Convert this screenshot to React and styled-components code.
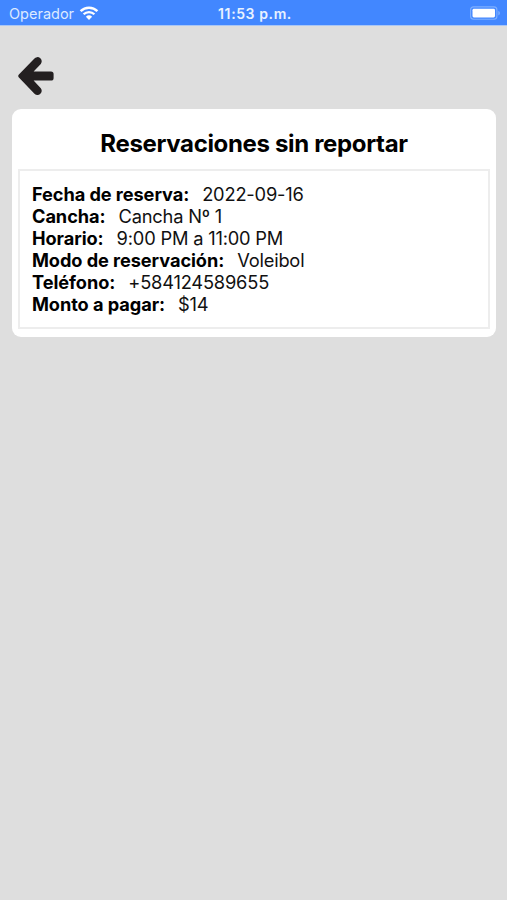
import React from "react";
import styled, { createGlobalStyle } from "styled-components";

const reservation = [
  { label: "Fecha de reserva:", value: "2022-09-16" },
  { label: "Cancha:", value: "Cancha Nº 1" },
  { label: "Horario:", value: "9:00 PM a 11:00 PM" },
  { label: "Modo de reservación:", value: "Voleibol" },
  { label: "Teléfono:", value: "+584124589655" },
  { label: "Monto a pagar:", value: "$14" },
];

const WifiIcon = () => (
  <svg width="20" height="15" viewBox="0 0 20 15" fill="none">
    <path d="M1.6 5.1a12 12 0 0 1 16.8 0" stroke="#fff" strokeWidth="2.5" />
    <path d="M4.6 8.3a7.7 7.7 0 0 1 10.8 0" stroke="#fff" strokeWidth="2.3" />
    <path d="M10 14 6.9 10.8a4.5 4.5 0 0 1 6.2 0z" fill="#fff" />
  </svg>
);

const BatteryIcon = () => (
  <svg width="31" height="15" viewBox="0 0 31 15" fill="none">
    <rect x="0.6" y="0.9" width="26.3" height="12.4" rx="3" stroke="#7fb0ff" strokeWidth="1.1" />
    <rect x="2.5" y="2.8" width="22.5" height="8.6" rx="1.4" fill="#fff" />
    <path d="M28.3 5v4.4c1-.4 1.6-1.2 1.6-2.2S29.3 5.4 28.3 5z" fill="#7fb0ff" />
  </svg>
);

const ArrowIcon = () => (
  <svg width="36" height="38" viewBox="0 0 36 38" fill="none">
    <path
      d="M.9 17.6 16.2 1.7a4.2 4.2 0 0 1 6.6 5.2L15.6 14.5H33a2.6 2.6 0 0 1 2.6 2.6V21a2.6 2.6 0 0 1-2.6 2.6H15.6l7.2 7.6a4.2 4.2 0 0 1-6.6 5.2L.9 20.5a2.1 2.1 0 0 1 0-2.9z"
      fill="#231f20"
    />
  </svg>
);

const App = () => {
  return (
    <Screen>
      <GlobalStyle />
      <StatusBar>
        <Carrier>
          Operador
          <WifiIcon />
        </Carrier>
        <Clock>11:53 p.m.</Clock>
        <Battery>
          <BatteryIcon />
        </Battery>
      </StatusBar>

      <BackButton aria-label="Volver">
        <ArrowIcon />
      </BackButton>

      <Card>
        <Title>Reservaciones sin reportar</Title>
        <Details>
          {reservation.map((item) => (
            <Row key={item.label}>
              <Label>{item.label}</Label>
              <Value>{item.value}</Value>
            </Row>
          ))}
        </Details>
      </Card>
    </Screen>
  );
};

const GlobalStyle = createGlobalStyle`
  * {
    box-sizing: border-box;
  }

  body {
    margin: 0;
    background-color: #dedede;
    font-family: Inter, "Liberation Sans", sans-serif;
  }
`;

const Screen = styled.div`
  min-height: 100vh;
  background-color: #dedede;
`;

const StatusBar = styled.header`
  display: grid;
  grid-template-columns: 1fr auto 1fr;
  align-items: center;
  height: 26px;
  padding: 2px 6px 0 9px;
  background-color: #4287ff;
  border-bottom: 1px solid #a9c6f5;
  color: #fff;
`;

const Carrier = styled.div`
  display: flex;
  align-items: center;
  gap: 5px;
  font-size: 14.5px;
  color: #dceaff;
`;

const Clock = styled.div`
  font-size: 14px;
  font-weight: 600;
  letter-spacing: 0.6px;
  color: #e8f2ff;
`;

const Battery = styled.div`
  display: flex;
  justify-content: flex-end;
`;

const BackButton = styled.button`
  display: block;
  margin: 31px 0 0 18px;
  padding: 0;
  border: none;
  background: none;
  line-height: 0;
  cursor: pointer;
`;

const Card = styled.section`
  margin: 14px 11px 0 12px;
  padding: 20px 6px 8px;
  border-radius: 9px;
  background-color: #fff;
`;

const Title = styled.h1`
  margin: 0 0 10px;
  font-size: 24px;
  font-weight: 700;
  line-height: 30px;
  letter-spacing: -0.34px;
  text-align: center;
  color: #000;
`;

const Details = styled.div`
  padding: 12px;
  border: 2px solid #ededed;
`;

const Row = styled.div`
  display: flex;
  gap: 13px;
  font-size: 18.3px;
  line-height: 22px;
  color: #111;
`;

const Label = styled.span`
  font-size: 18.2px;
  font-weight: 700;
  letter-spacing: -0.07px;
  color: #000;
`;

const Value = styled.span`
  letter-spacing: -0.2px;
`;

export default App;
